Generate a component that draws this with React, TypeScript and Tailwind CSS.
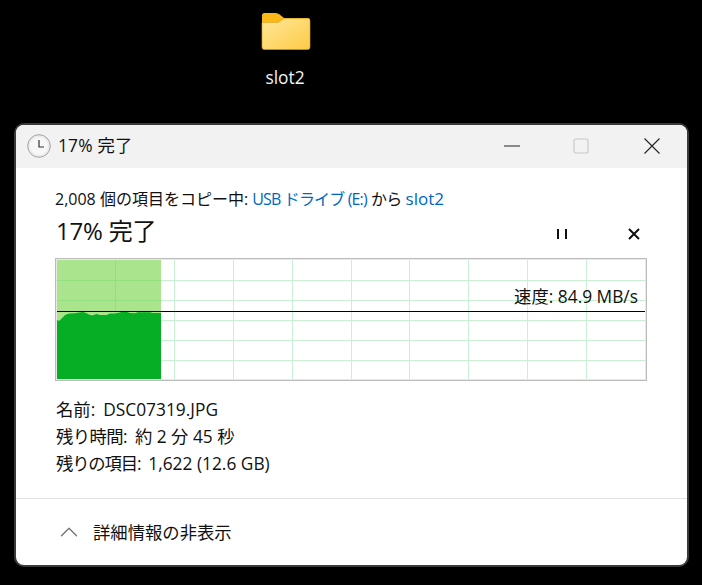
import React from 'react';
import { ChevronUp } from 'lucide-react';

const font = "font-['Open_Sans','Noto_Sans_CJK_JP',sans-serif]";

// speed history, in svg coordinates of the chart box
const profile: [number, number][] = [
    [2, 62], [4, 63], [6.7, 60.5], [10, 57], [14, 55.5], [20, 55.3], [24, 54.5], [28, 54], [31, 55], [33, 56],
    [36.7, 57.5], [41.7, 56], [45, 57], [51.7, 57], [55, 55.5], [60, 55.5], [65, 54.5], [69, 52.7], [72, 54],
    [75, 55], [80, 55.3], [83, 54.3], [95, 54.3], [98, 55], [106, 55],
];

const Chart = () => {
    const xs = [60, 119, 178, 237, 296, 354, 413, 472, 531];
    const ys = [22, 42, 62, 82, 102];
    const area = `M2 121 L${profile.map((p) => p.join(' ')).join(' L')} L106 121 Z`;

    return (
        <div className="relative mt-[10px] ml-[39px] w-[592px] h-[123px]">
            <svg width="592" height="123" className="block">
                <rect x="0.5" y="0.5" width="591" height="122" fill="#fff" stroke="#bcbcbc" strokeWidth="1" />
                <rect x="1.5" y="1.5" width="589" height="120" fill="#fff" stroke="#e8e8e8" strokeWidth="1" />
                {xs.map((x) => (
                    <line key={x} x1={x + 0.5} y1="2" x2={x + 0.5} y2="121" stroke="#c9f0d2" />
                ))}
                {ys.map((y) => (
                    <line key={y} x1="2" y1={y + 0.5} x2="590" y2={y + 0.5} stroke="#c9f0d2" />
                ))}
                <rect x="2" y="2" width="104" height="119" fill="#aae58e" />
                <line x1="60.5" y1="2" x2="60.5" y2="121" stroke="#92e07e" />
                {ys.map((y) => (
                    <line key={y} x1="2" y1={y + 0.5} x2="106" y2={y + 0.5} stroke="#92e07e" />
                ))}
                <path d={area} fill="#06ae26" />
                <line x1="2" y1="53.5" x2="590" y2="53.5" stroke="#000" />
            </svg>
            <span className="absolute right-[9px] top-[26px] text-[17.33px] leading-[24px] text-[#111]">速度: 84.9 MB/s</span>
        </div>
    );
};

const Row = ({ label, value, labelClass }: { label: string; value: string; labelClass?: string }) => (
    <div className="flex gap-[8px] h-[27px] items-center text-[17.33px] text-[#111]">
        <span className={labelClass}>{label}</span>
        <span>{value}</span>
    </div>
);

export default function App() {
    return (
        <div className={`w-[702px] h-[585px] bg-black overflow-hidden flex flex-col ${font}`}>
            {/* Desktop icon */}
            <div className="h-[123px] w-[570px] shrink-0 flex flex-col items-center">
                <svg width="50" height="40" viewBox="0 0 50 40" className="mt-[11px] ml-[2px]">
                    <defs>
                        <linearGradient id="fold" x1="0" y1="0" x2="1" y2="1">
                            <stop offset="0" stopColor="#ffe79a" />
                            <stop offset="1" stopColor="#fdcb45" />
                        </linearGradient>
                    </defs>
                    <path d="M1 4.5 a2.5 2.5 0 0 1 2.5-2.5 H15 l3 1 L23 7 H47 a2 2 0 0 1 2 2 V12 H1 Z" fill="#fbb917" />
                    <path d="M1 11.5 H17 L23.5 7.5 H46.5 a2.5 2.5 0 0 1 2.5 2.5 V36 a2.5 2.5 0 0 1-2.5 2.5 H3.5 A2.5 2.5 0 0 1 1 36 Z" fill="url(#fold)" stroke="#d9a227" strokeWidth="0.6" />
                </svg>
                <span className="mt-[14px] text-[17.33px] leading-[24px] text-[#f2f2f2]">slot2</span>
            </div>

            {/* Copy dialog */}
            <div className="ml-[14px] w-[675px] h-[444px] shrink-0 bg-white rounded-[10px] border-2 border-[#3a3a3a] overflow-hidden flex flex-col">
                <div className="h-[43px] pb-[2px] bg-[#f2f2f2] flex items-center shrink-0">
                    <svg width="24" height="24" viewBox="0 0 24 24" className="ml-[11px]">
                        <circle cx="12" cy="12" r="11.3" fill="#ececec" stroke="#a3a3a3" />
                        <circle cx="12" cy="12" r="9" fill="#f7f7f7" />
                        <path d="M12 6 V13 H17" fill="none" stroke="#333" strokeWidth="1.2" />
                    </svg>
                    <span className="ml-[7px] text-[17.33px] tracking-[0.2px] text-[#111]">17% 完了</span>
                    <svg width="16" height="2" className="ml-auto">
                        <rect width="16" height="1" y="0.5" fill="#222" />
                    </svg>
                    <svg width="16" height="16" className="ml-[53px]">
                        <rect x="1" y="1" width="14" height="14" rx="2" fill="none" stroke="#c8c8c8" strokeWidth="1.2" />
                    </svg>
                    <svg width="16" height="16" className="ml-[55px] mr-[27px]">
                        <path d="M0.5 0.5 L15.5 15.5 M15.5 0.5 L0.5 15.5" stroke="#222" strokeWidth="1.1" />
                    </svg>
                </div>

                <div className="flex-1 flex flex-col">
                    <div className="mt-[19px] ml-[39px] text-[16px] leading-[24px] text-[#111]">
                        2,008 個の項目をコピー中: <span className="text-[#0067c0] tracking-[-0.85px]">USB ドライブ (E:)</span> <span className="tracking-[-0.8px]">から</span> <span className="text-[#0067c0] text-[17px]">slot2</span>
                    </div>
                    <div className="mt-[3px] ml-[40px] flex items-center h-[34px]">
                        <span className="text-[24px] tracking-[-0.2px] text-[#111]">17% 完了</span>
                        <svg width="11" height="10" className="ml-auto mt-[5px]">
                            <path d="M2 0 V10 M10 0 V10" stroke="#111" strokeWidth="2" />
                        </svg>
                        <svg width="12" height="12" className="ml-[61px] mr-[47px] mt-[5px]">
                            <path d="M1 1 L11 11 M11 1 L1 11" stroke="#111" strokeWidth="2" />
                        </svg>
                    </div>
                    <Chart />
                    <div className="mt-[15px] ml-[40px] flex flex-col">
                        <Row label="名前:" value="DSC07319.JPG" />
                        <Row label="残り時間:" value="約 2 分 45 秒" labelClass="tracking-[-0.6px]" />
                        <Row label="残りの項目:" value="1,622 (12.6 GB)" labelClass="tracking-[-1.15px]" />
                    </div>
                    <div className="mt-auto h-[67px] border-t border-[#e2e2e2] flex items-center">
                        <ChevronUp size={30} strokeWidth={1.1} className="ml-[38px] text-[#777]" />
                        <span className="ml-[9px] mt-[1px] text-[17.33px] text-[#111]">詳細情報の非表示</span>
                    </div>
                </div>
            </div>
        </div>
    );
}
